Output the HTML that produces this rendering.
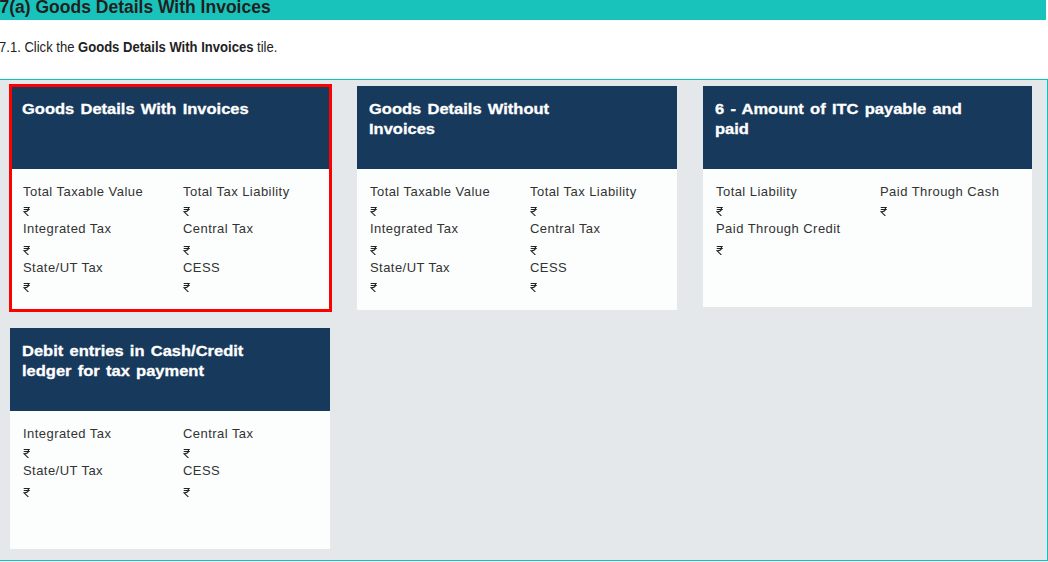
<!DOCTYPE html>
<html><head><meta charset="utf-8">
<style>
html,body{margin:0;padding:0;}
body{width:1048px;height:562px;overflow:hidden;background:#fff;position:relative;font-family:"Liberation Sans",sans-serif;}
.band{position:absolute;left:0;top:0;width:1046px;height:20px;background:#18c3bc;}
.h1{position:absolute;left:-0.5px;top:-3px;font-weight:bold;font-size:17.5px;line-height:20px;color:#231f20;white-space:nowrap;}
.p{position:absolute;left:-1px;top:38.5px;font-size:14px;line-height:16px;color:#222;white-space:nowrap;transform:scaleX(0.932);transform-origin:0 0;}
.box{position:absolute;left:-1px;top:79px;width:1049px;height:482px;border:1px solid #00c6c6;border-left:none;background:#e4e8eb;box-sizing:border-box;}
.card{position:absolute;width:320px;background:#fcfefd;}
.hd{position:absolute;left:0;top:0;right:0;height:83px;background:#17395c;}
.tt{position:absolute;left:12px;top:12.5px;color:#fff;font-weight:bold;font-size:15px;line-height:20px;letter-spacing:0px;word-spacing:1.5px;-webkit-text-stroke:0.3px #fff;white-space:nowrap;transform:scaleX(1.1);transform-origin:0 0;}
.lb{position:absolute;font-size:13px;line-height:15px;letter-spacing:0.45px;color:#333;white-space:nowrap;}
.rs{position:absolute;width:8px;height:10px;}
.red{position:absolute;left:9px;top:84px;width:323px;height:228px;border:3px solid #ff0000;box-sizing:border-box;}
</style></head><body>
<div class="band"></div>
<div class="h1">7(a) Goods Details With Invoices</div>
<div class="p">7.1. Click the <b>Goods Details With Invoices</b> tile.</div>
<div class="box"></div>

<div class="card" style="left:10px;top:86px;width:320px;height:224px;">
  <div class="hd"><div class="tt">Goods Details With Invoices</div></div>
  <div class="lb" style="left:13px;top:98px">Total Taxable Value</div>
  <svg class="rs" style="left:13px;top:120px" viewBox="0 0 8 10"><path d="M0.7 1.5H6.8M0.7 3.5H6.8M4.2 1.5C6.4 2 6.3 5.5 1 5.8L5.4 10" fill="none" stroke="#222" stroke-width="1.05"/></svg>
  <div class="lb" style="left:173px;top:98px">Total Tax Liability</div>
  <svg class="rs" style="left:173px;top:120px" viewBox="0 0 8 10"><path d="M0.7 1.5H6.8M0.7 3.5H6.8M4.2 1.5C6.4 2 6.3 5.5 1 5.8L5.4 10" fill="none" stroke="#222" stroke-width="1.05"/></svg>
  <div class="lb" style="left:13px;top:135px">Integrated Tax</div>
  <svg class="rs" style="left:13px;top:159px" viewBox="0 0 8 10"><path d="M0.7 1.5H6.8M0.7 3.5H6.8M4.2 1.5C6.4 2 6.3 5.5 1 5.8L5.4 10" fill="none" stroke="#222" stroke-width="1.05"/></svg>
  <div class="lb" style="left:173px;top:135px">Central Tax</div>
  <svg class="rs" style="left:173px;top:159px" viewBox="0 0 8 10"><path d="M0.7 1.5H6.8M0.7 3.5H6.8M4.2 1.5C6.4 2 6.3 5.5 1 5.8L5.4 10" fill="none" stroke="#222" stroke-width="1.05"/></svg>
  <div class="lb" style="left:13px;top:174px">State/UT Tax</div>
  <svg class="rs" style="left:13px;top:196px" viewBox="0 0 8 10"><path d="M0.7 1.5H6.8M0.7 3.5H6.8M4.2 1.5C6.4 2 6.3 5.5 1 5.8L5.4 10" fill="none" stroke="#222" stroke-width="1.05"/></svg>
  <div class="lb" style="left:173px;top:174px">CESS</div>
  <svg class="rs" style="left:173px;top:196px" viewBox="0 0 8 10"><path d="M0.7 1.5H6.8M0.7 3.5H6.8M4.2 1.5C6.4 2 6.3 5.5 1 5.8L5.4 10" fill="none" stroke="#222" stroke-width="1.05"/></svg>
</div>
<div class="card" style="left:357px;top:86px;width:320px;height:224px;">
  <div class="hd"><div class="tt">Goods Details Without<br>Invoices</div></div>
  <div class="lb" style="left:13px;top:98px">Total Taxable Value</div>
  <svg class="rs" style="left:13px;top:120px" viewBox="0 0 8 10"><path d="M0.7 1.5H6.8M0.7 3.5H6.8M4.2 1.5C6.4 2 6.3 5.5 1 5.8L5.4 10" fill="none" stroke="#222" stroke-width="1.05"/></svg>
  <div class="lb" style="left:173px;top:98px">Total Tax Liability</div>
  <svg class="rs" style="left:173px;top:120px" viewBox="0 0 8 10"><path d="M0.7 1.5H6.8M0.7 3.5H6.8M4.2 1.5C6.4 2 6.3 5.5 1 5.8L5.4 10" fill="none" stroke="#222" stroke-width="1.05"/></svg>
  <div class="lb" style="left:13px;top:135px">Integrated Tax</div>
  <svg class="rs" style="left:13px;top:159px" viewBox="0 0 8 10"><path d="M0.7 1.5H6.8M0.7 3.5H6.8M4.2 1.5C6.4 2 6.3 5.5 1 5.8L5.4 10" fill="none" stroke="#222" stroke-width="1.05"/></svg>
  <div class="lb" style="left:173px;top:135px">Central Tax</div>
  <svg class="rs" style="left:173px;top:159px" viewBox="0 0 8 10"><path d="M0.7 1.5H6.8M0.7 3.5H6.8M4.2 1.5C6.4 2 6.3 5.5 1 5.8L5.4 10" fill="none" stroke="#222" stroke-width="1.05"/></svg>
  <div class="lb" style="left:13px;top:174px">State/UT Tax</div>
  <svg class="rs" style="left:13px;top:196px" viewBox="0 0 8 10"><path d="M0.7 1.5H6.8M0.7 3.5H6.8M4.2 1.5C6.4 2 6.3 5.5 1 5.8L5.4 10" fill="none" stroke="#222" stroke-width="1.05"/></svg>
  <div class="lb" style="left:173px;top:174px">CESS</div>
  <svg class="rs" style="left:173px;top:196px" viewBox="0 0 8 10"><path d="M0.7 1.5H6.8M0.7 3.5H6.8M4.2 1.5C6.4 2 6.3 5.5 1 5.8L5.4 10" fill="none" stroke="#222" stroke-width="1.05"/></svg>
</div>
<div class="card" style="left:703px;top:86px;width:329px;height:221px;">
  <div class="hd"><div class="tt">6 - Amount of ITC payable and<br>paid</div></div>
  <div class="lb" style="left:13px;top:98px">Total Liability</div>
  <svg class="rs" style="left:13px;top:120px" viewBox="0 0 8 10"><path d="M0.7 1.5H6.8M0.7 3.5H6.8M4.2 1.5C6.4 2 6.3 5.5 1 5.8L5.4 10" fill="none" stroke="#222" stroke-width="1.05"/></svg>
  <div class="lb" style="left:177px;top:98px">Paid Through Cash</div>
  <svg class="rs" style="left:177px;top:120px" viewBox="0 0 8 10"><path d="M0.7 1.5H6.8M0.7 3.5H6.8M4.2 1.5C6.4 2 6.3 5.5 1 5.8L5.4 10" fill="none" stroke="#222" stroke-width="1.05"/></svg>
  <div class="lb" style="left:13px;top:135px">Paid Through Credit</div>
  <svg class="rs" style="left:13px;top:159px" viewBox="0 0 8 10"><path d="M0.7 1.5H6.8M0.7 3.5H6.8M4.2 1.5C6.4 2 6.3 5.5 1 5.8L5.4 10" fill="none" stroke="#222" stroke-width="1.05"/></svg>
</div>
<div class="card" style="left:10px;top:328px;width:320px;height:221px;">
  <div class="hd"><div class="tt">Debit entries in Cash/Credit<br>ledger for tax payment</div></div>
  <div class="lb" style="left:13px;top:98px">Integrated Tax</div>
  <svg class="rs" style="left:13px;top:120px" viewBox="0 0 8 10"><path d="M0.7 1.5H6.8M0.7 3.5H6.8M4.2 1.5C6.4 2 6.3 5.5 1 5.8L5.4 10" fill="none" stroke="#222" stroke-width="1.05"/></svg>
  <div class="lb" style="left:173px;top:98px">Central Tax</div>
  <svg class="rs" style="left:173px;top:120px" viewBox="0 0 8 10"><path d="M0.7 1.5H6.8M0.7 3.5H6.8M4.2 1.5C6.4 2 6.3 5.5 1 5.8L5.4 10" fill="none" stroke="#222" stroke-width="1.05"/></svg>
  <div class="lb" style="left:13px;top:135px">State/UT Tax</div>
  <svg class="rs" style="left:13px;top:159px" viewBox="0 0 8 10"><path d="M0.7 1.5H6.8M0.7 3.5H6.8M4.2 1.5C6.4 2 6.3 5.5 1 5.8L5.4 10" fill="none" stroke="#222" stroke-width="1.05"/></svg>
  <div class="lb" style="left:173px;top:135px">CESS</div>
  <svg class="rs" style="left:173px;top:159px" viewBox="0 0 8 10"><path d="M0.7 1.5H6.8M0.7 3.5H6.8M4.2 1.5C6.4 2 6.3 5.5 1 5.8L5.4 10" fill="none" stroke="#222" stroke-width="1.05"/></svg>
</div>
<div class="red"></div>
</body></html>
